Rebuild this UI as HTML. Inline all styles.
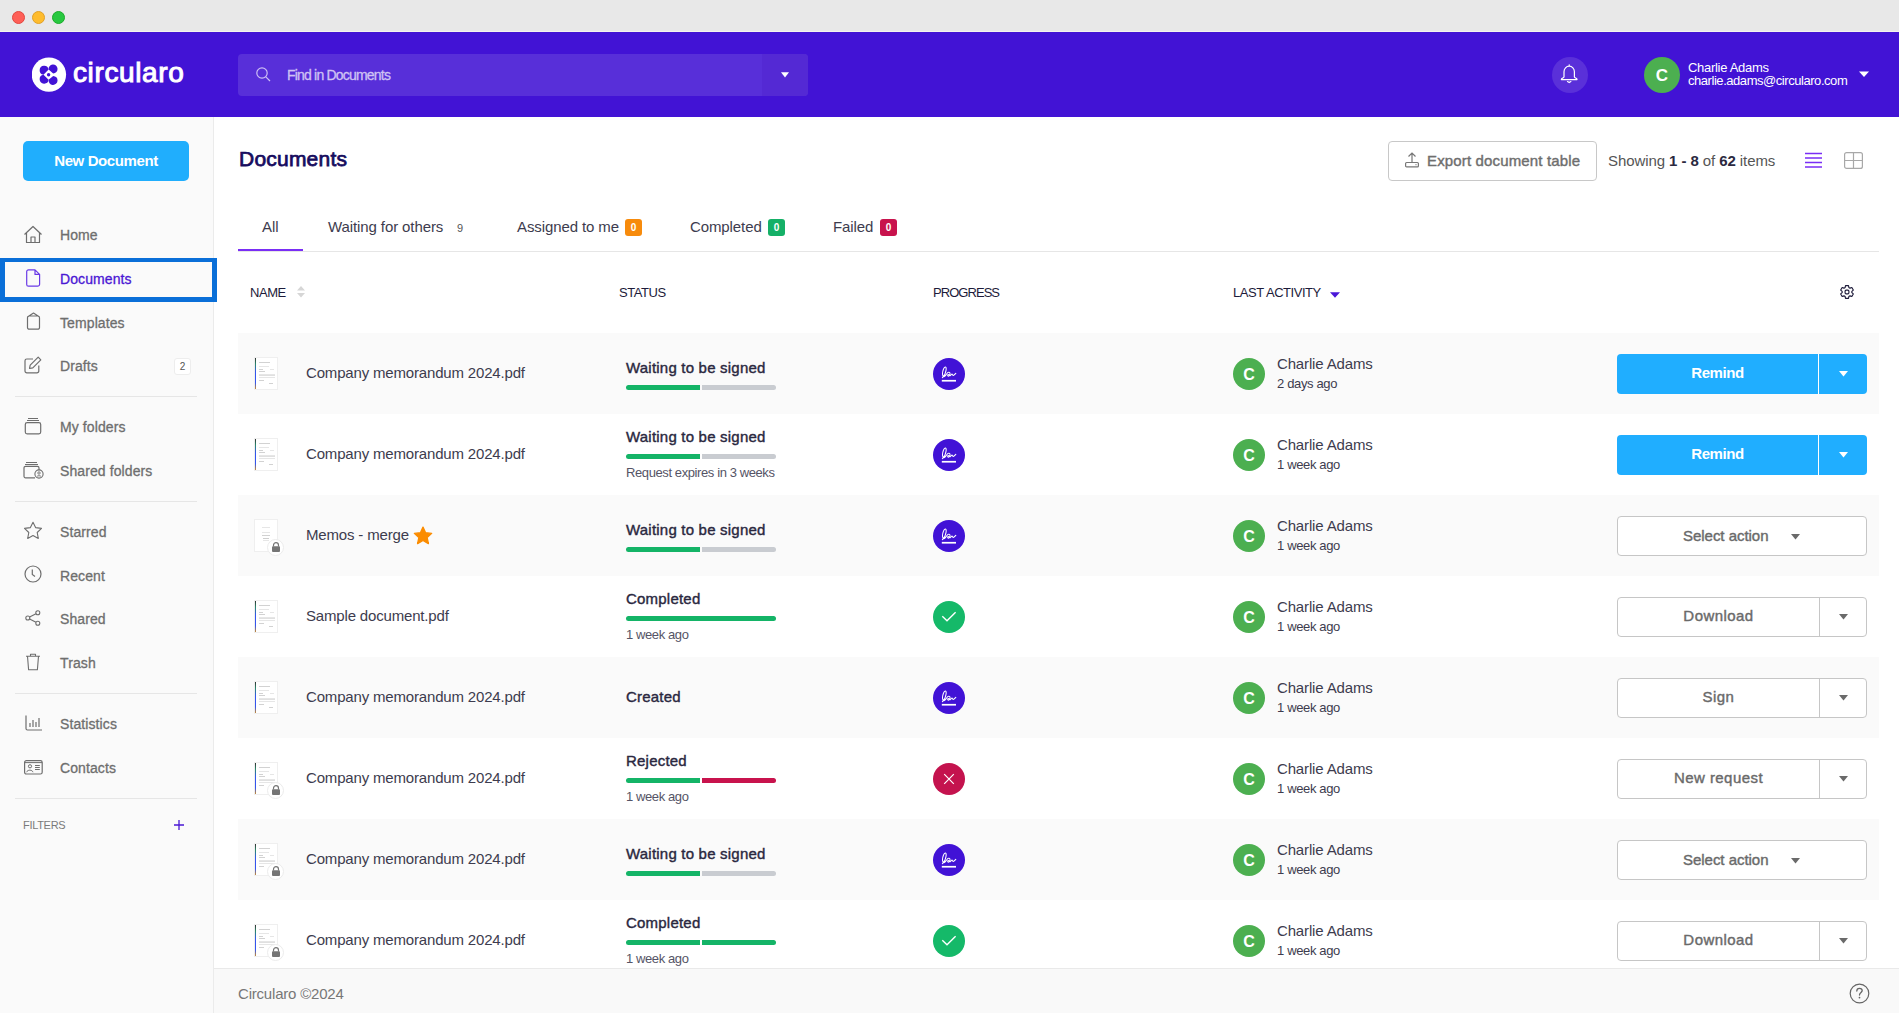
<!DOCTYPE html>
<html><head><meta charset="utf-8">
<style>
*{box-sizing:border-box}
html,body{margin:0;padding:0}
body{width:1899px;height:1013px;overflow:hidden;position:relative;background:#fff;font-family:"Liberation Sans",sans-serif;color:#3a3a4a}
.abs{position:absolute}
#titlebar{position:absolute;left:0;top:0;width:1899px;height:32px;background:#e8e8e8;border-bottom:1px solid #f4f4ee}
.tl-dot{position:absolute;top:10.6px;width:13.2px;height:13.2px;border-radius:50%}
#header{position:absolute;left:0;top:32px;width:1899px;height:85px;background:#4213d5}
#search{position:absolute;left:238px;top:22px;width:570px;height:42px;border-radius:4px;background:#582fd9;overflow:hidden}
#search .dd{position:absolute;left:524px;top:0;width:46px;height:42px;background:#5429d4}
#sidebar{position:absolute;left:0;top:117px;width:214px;height:896px;background:#fafafa;border-right:1px solid #ebebeb}
.nav{position:absolute;left:60px;font-size:14px;font-weight:normal;-webkit-text-stroke:0.3px currentColor;color:#6e6e6e;letter-spacing:0.1px;white-space:nowrap}
.navi{position:absolute;left:23px}
.sep{}
.hsep{position:absolute;left:15px;width:182px;height:1px;background:#e6e6e6}
#main{position:absolute;left:214px;top:117px;width:1685px;height:896px}
.tab{position:absolute;top:102px;font-size:15px;color:#3d3c4e;letter-spacing:-0.1px;white-space:nowrap}
.badge{display:inline-block;position:absolute;top:102px;width:17px;height:17px;border-radius:3px;color:#fff;font-size:10px;font-weight:bold;text-align:center;line-height:17px}
.th{position:absolute;top:169px;font-size:13px;color:#1d1b3a;letter-spacing:-0.45px;white-space:nowrap}
.row{position:absolute;left:238px;width:1641px;height:81px}
.tw{position:absolute}
.thumb{position:absolute;left:0;top:0;width:24px;height:33px;background:#fff;border:1px solid #efefef}
.strip{position:absolute;left:0;top:0;width:1.4px;height:31px;background:linear-gradient(#333,#2a8a6a 20%,#3355ee 45%,#3355ee 80%,#c88a30)}
.tl{position:absolute;height:1px;background:#e6e6e6}
.lockb{position:absolute;left:13px;top:20px;width:17px;height:17px;border-radius:50%;background:#fff;border:1px solid #ececec;display:flex;align-items:center;justify-content:center}
.lockb svg{margin-top:-1px}
.nm{position:absolute;top:31px;font-size:15px;color:#3d3c4e;letter-spacing:-0.17px;white-space:nowrap;line-height:18px}
.star{position:absolute;left:107px;top:0px}
.st{position:absolute;left:388px;font-size:15px;font-weight:normal;-webkit-text-stroke:0.4px #2a2840;color:#2a2840;letter-spacing:0.21px;white-space:nowrap;line-height:18px}
.bar1{position:absolute;left:388px;width:74px;height:5px;background:#14b467;border-radius:3px 0 0 3px}
.bar2{position:absolute;left:464px;width:74px;height:5px;border-radius:0 3px 3px 0}
.sub{position:absolute;left:388px;font-size:13px;color:#555466;letter-spacing:-0.4px;white-space:nowrap;line-height:16px}
.prog{position:absolute;left:695px;top:25px;width:32px;height:32px}
.prog svg{display:block}
.av{position:absolute;left:995px;top:25px;width:32px;height:32px;border-radius:50%;background:#4caf50;color:#fff;font-weight:bold;font-size:16px;text-align:center;line-height:33px}
.an{position:absolute;left:1039px;top:22px;font-size:15px;color:#3d3c4e;letter-spacing:-0.15px;white-space:nowrap;line-height:18px}
.aw{position:absolute;left:1039px;top:43px;font-size:13px;color:#3d3c4e;letter-spacing:-0.35px;white-space:nowrap;line-height:16px}
.btn{position:absolute;left:1379px;top:21px;width:250px;height:40px;border-radius:4px}
.btn.blue{background:#20aeff}
.btn.white{background:#fff;border:1px solid #c6c6c6}
.btn .bl{position:absolute;left:0;top:-1.6px;width:201px;height:100%;display:flex;align-items:center;justify-content:center;font-size:15px;font-weight:bold;letter-spacing:-0.45px}
.btn.blue .bl{color:#fff}
.btn.white .bl{color:#6a6a6a;font-weight:normal;-webkit-text-stroke:0.4px #6a6a6a;letter-spacing:0.45px}
.btn .sep{position:absolute;left:201px;top:0;width:1px;height:100%}
.btn.blue .sep{background:#fff}
.btn.white .sep{background:#c6c6c6}
.btn .dd{position:absolute;left:202px;top:0;right:0;height:100%;display:flex;align-items:center;justify-content:center}
.btn .dd svg,.btn .sc svg{display:block}
.btn .sl{position:absolute;left:65px;top:9.5px;font-size:15px;font-weight:normal;-webkit-text-stroke:0.4px #6a6a6a;color:#6a6a6a;letter-spacing:-0.03px;white-space:nowrap;line-height:18px}
.btn .sc{position:absolute;left:173px;top:17px}
#footer{position:absolute;left:214px;top:968px;width:1685px;height:45px;background:#f9f9f9;border-top:1px solid #e9e9e9}
</style></head>
<body>
<div id="titlebar">
  <div class="tl-dot" style="left:12.3px;background:#fe5f57;border:0.5px solid #e2463f"></div>
  <div class="tl-dot" style="left:32.3px;background:#febc2e;border:0.5px solid #e0a028"></div>
  <div class="tl-dot" style="left:52.3px;background:#28c840;border:0.5px solid #1aab29"></div>
</div>
<div id="header">
  <svg class="abs" style="left:32px;top:25px" width="35" height="35" viewBox="0 0 35 35">
    <circle cx="16.9" cy="17.6" r="17.2" fill="#fff"/>
    <g fill="#4213d5">
      <path d="M16.6 12.6 L11.5 17.7 A4.5 4.5 0 1 1 16.6 12.6 Z"/>
      <path d="M16.6 12.6 L21.2 16.5 A4.5 4.5 0 1 0 16.6 12.6 Z"/>
      <path d="M16.6 22.8 L11.5 17.7 A4.5 4.5 0 1 0 16.6 22.8 Z"/>
      <path d="M16.6 22.8 L21.2 18.9 A4.5 4.5 0 1 1 16.6 22.8 Z"/>
    </g>
    <circle cx="16.6" cy="17.7" r="1.7" fill="#4213d5"/>
  </svg>
  <div class="abs" style="left:73px;top:24px;font-size:28px;font-weight:normal;-webkit-text-stroke:1px #fff;color:#fff;letter-spacing:0.62px;line-height:34px">circularo</div>
  <div id="search">
    <svg class="abs" style="left:18px;top:13px" width="15" height="15" viewBox="0 0 15 15"><circle cx="6" cy="6" r="5.2" stroke="#cdbff5" stroke-width="1.2" fill="none"/><path d="M9.8 9.8 L14 14" stroke="#cdbff5" stroke-width="1.2"/></svg>
    <div class="abs" style="left:49px;top:13px;font-size:14px;color:#cfc2f4;-webkit-text-stroke:0.3px #cfc2f4;letter-spacing:-0.8px;line-height:16px">Find in Documents</div>
    <div class="dd"><svg class="abs" style="left:19px;top:18px" width="8" height="6" viewBox="0 0 8 6"><path d="M0 0.3 H8 L4 5.6 Z" fill="#fff"/></svg></div>
  </div>
  <div class="abs" style="left:1552px;top:25px;width:36px;height:36px;border-radius:50%;background:#5a30d9"></div>
  <svg class="abs" style="left:1560px;top:32px" width="19" height="20" viewBox="0 0 19 20"><path d="M9.2 0.8 V2.2 M4 13 V7.8 C4 4.6 6.3 2.2 9.2 2.2 C12.1 2.2 14.4 4.6 14.4 7.8 V13 C14.4 13.8 17 14.2 17 15.2 V15.6 H1.4 V15.2 C1.4 14.2 4 13.8 4 13 Z M7.5 17.6 L9.2 18.6 L10.9 17.6" stroke="#fff" stroke-width="1.2" fill="none" stroke-linejoin="round" stroke-linecap="round"/></svg>
  <div class="abs" style="left:1644px;top:25px;width:36px;height:36px;border-radius:50%;background:#4caf50;color:#fff;font-weight:bold;font-size:17px;text-align:center;line-height:38px">C</div>
  <div class="abs" style="left:1688px;top:28px;font-size:13px;color:#fff;letter-spacing:-0.3px;line-height:15px">Charlie Adams</div>
  <div class="abs" style="left:1688px;top:41px;font-size:13px;color:#fff;letter-spacing:-0.45px;line-height:15px">charlie.adams@circularo.com</div>
  <svg class="abs" style="left:1859px;top:39px" width="10" height="7" viewBox="0 0 10 7"><path d="M0 0.5 H10 L5 6 Z" fill="#fff"/></svg>
</div>

<div id="sidebar">
  <div class="abs" style="left:23px;top:24px;width:166px;height:40px;border-radius:5px;background:#20aefd;color:#fff;font-size:15px;font-weight:bold;text-align:center;line-height:40px;letter-spacing:-0.4px">New Document</div>

  <!-- Home -->
  <svg class="navi" style="top:108px;left:23px" width="20" height="19" viewBox="0 0 20 19"><path d="M1.5 9.5 L10 1.5 L18.5 9.5 M3.5 7.8 V17.5 H16.5 V7.8 M8 17.5 V12 H12 V17.5" stroke="#6e6e6e" stroke-width="1.2" fill="none" stroke-linejoin="round"/></svg>
  <div class="nav" style="top:110px">Home</div>

  <!-- Documents selected -->
  <div class="abs" style="left:0;top:141px;width:217px;height:44px;border:4px solid #0a6fd8;border-width:4px 5px 5px 5px"></div>
  <svg class="navi" style="top:152px;left:26px" width="15" height="18" viewBox="0 0 15 18"><path d="M2.5 0.8 H9 L13.6 5.4 V15.2 A2 2 0 0 1 11.6 17.2 H2.5 A1.8 1.8 0 0 1 0.7 15.4 V2.6 A1.8 1.8 0 0 1 2.5 0.8 Z M9 0.8 V5.4 H13.6" stroke="#6a3ae6" stroke-width="1.2" fill="none" stroke-linejoin="round"/></svg>
  <div class="nav" style="top:154px;color:#4a17d4">Documents</div>

  <!-- Templates -->
  <svg class="navi" style="top:195px;left:26px" width="15" height="18" viewBox="0 0 15 18"><path d="M3.2 4 H11.8 A1.7 1.7 0 0 1 13.5 5.7 V15.5 A1.7 1.7 0 0 1 11.8 17.2 H3.2 A1.7 1.7 0 0 1 1.5 15.5 V5.7 A1.7 1.7 0 0 1 3.2 4 Z M2.2 4.4 L7.5 1 L12.8 4.4" stroke="#6e6e6e" stroke-width="1.2" fill="none" stroke-linejoin="round"/></svg>
  <div class="nav" style="top:198px">Templates</div>

  <!-- Drafts -->
  <svg class="navi" style="top:239px;left:24px" width="18" height="18" viewBox="0 0 18 18"><path d="M9 3 H2.8 A1.8 1.8 0 0 0 1 4.8 V15 A1.8 1.8 0 0 0 2.8 16.8 H13 A1.8 1.8 0 0 0 14.8 15 V9.5 M5.5 12.5 L6.2 9.2 L14.2 1.2 L16.8 3.8 L8.8 11.8 Z" stroke="#6e6e6e" stroke-width="1.2" fill="none" stroke-linejoin="round"/></svg>
  <div class="nav" style="top:241px">Drafts</div>
  <div class="abs" style="left:174px;top:241px;width:17px;height:17px;border-radius:3px;background:#fff;border:1px solid #ededed;font-size:10px;color:#555;text-align:center;line-height:16px">2</div>

  <div class="hsep" style="top:279px"></div>

  <!-- My folders -->
  <svg class="navi" style="top:300px;left:24px" width="18" height="18" viewBox="0 0 18 18"><path d="M4 1.5 H14 M3 3.5 H15" stroke="#6e6e6e" stroke-width="1"/><rect x="1.3" y="5.6" width="15.4" height="11.3" rx="1.8" stroke="#6e6e6e" stroke-width="1.2" fill="none"/></svg>
  <div class="nav" style="top:302px">My folders</div>

  <!-- Shared folders -->
  <svg class="navi" style="top:344px;left:23px" width="22" height="19" viewBox="0 0 22 19"><path d="M3 1.5 H14 M2 3.5 H15" stroke="#6e6e6e" stroke-width="1"/><path d="M12 16.8 H2.6 A1.6 1.6 0 0 1 1 15.2 V6.9 A1.6 1.6 0 0 1 2.6 5.3 H14.4 A1.6 1.6 0 0 1 16 6.9 V9.5" stroke="#6e6e6e" stroke-width="1.2" fill="none"/><circle cx="16" cy="13" r="4.1" stroke="#6e6e6e" stroke-width="1.1" fill="#fafafa"/><circle cx="16" cy="12" r="1.2" stroke="#6e6e6e" stroke-width="0.9" fill="none"/><path d="M13.6 15.9 C14.3 14.3 17.7 14.3 18.4 15.9" stroke="#6e6e6e" stroke-width="0.9" fill="none"/></svg>
  <div class="nav" style="top:346px">Shared folders</div>

  <div class="hsep" style="top:384px"></div>

  <!-- Starred -->
  <svg class="navi" style="top:404px;left:23px" width="20" height="19" viewBox="0 0 20 19"><path d="M10 1.2 L12.6 6.6 L18.5 7.4 L14.2 11.5 L15.3 17.4 L10 14.6 L4.7 17.4 L5.8 11.5 L1.5 7.4 L7.4 6.6 Z" stroke="#6e6e6e" stroke-width="1.1" fill="none" stroke-linejoin="round"/></svg>
  <div class="nav" style="top:407px">Starred</div>

  <!-- Recent -->
  <svg class="navi" style="top:448px;left:24px" width="18" height="18" viewBox="0 0 18 18"><circle cx="9" cy="9" r="8" stroke="#6e6e6e" stroke-width="1.2" fill="none"/><path d="M8.3 4.5 V9.5 L11 11.5" stroke="#6e6e6e" stroke-width="1.2" fill="none"/></svg>
  <div class="nav" style="top:451px">Recent</div>

  <!-- Shared -->
  <svg class="navi" style="top:493px;left:25px" width="16" height="16" viewBox="0 0 16 16"><circle cx="12.8" cy="2.8" r="2" stroke="#6e6e6e" stroke-width="1.1" fill="none"/><circle cx="2.8" cy="8" r="2" stroke="#6e6e6e" stroke-width="1.1" fill="none"/><circle cx="12.8" cy="13.2" r="2" stroke="#6e6e6e" stroke-width="1.1" fill="none"/><path d="M4.6 7 L11 3.8 M4.6 9 L11 12.2" stroke="#6e6e6e" stroke-width="1.1"/></svg>
  <div class="nav" style="top:494px">Shared</div>

  <!-- Trash -->
  <svg class="navi" style="top:536px;left:25px" width="16" height="18" viewBox="0 0 16 18"><path d="M1 3.2 H15 M5.5 3.2 V1.2 H10.5 V3.2 M2.5 3.2 L3.6 16.8 H12.4 L13.5 3.2" stroke="#6e6e6e" stroke-width="1.1" fill="none" stroke-linejoin="round"/></svg>
  <div class="nav" style="top:538px">Trash</div>

  <div class="hsep" style="top:576px"></div>

  <!-- Statistics -->
  <svg class="navi" style="top:598px;left:25px" width="18" height="16" viewBox="0 0 18 16"><path d="M1 0.5 V13.5 A1.5 1.5 0 0 0 2.5 15 H17" stroke="#6e6e6e" stroke-width="1.2" fill="none"/><path d="M5 12 V8 M8 12 V5 M11 12 V7 M14 12 V3" stroke="#6e6e6e" stroke-width="1.2"/></svg>
  <div class="nav" style="top:599px">Statistics</div>

  <!-- Contacts -->
  <svg class="navi" style="top:643px;left:24px" width="20" height="16" viewBox="0 0 20 16"><rect x="0.6" y="0.6" width="17.6" height="13.4" rx="1.8" stroke="#6e6e6e" stroke-width="1.2" fill="none"/><path d="M0.6 2.6 H18.2" stroke="#6e6e6e" stroke-width="1"/><circle cx="6" cy="6.3" r="1.6" stroke="#6e6e6e" stroke-width="1" fill="none"/><path d="M2.6 12.2 C3.3 9.5 8.3 9.5 9 12.2 M11 5.5 H15.8 M11 7.5 H15.8 M11 9.5 H15.8" stroke="#6e6e6e" stroke-width="1" fill="none"/></svg>
  <div class="nav" style="top:643px">Contacts</div>

  <div class="hsep" style="top:681px"></div>

  <div class="abs" style="left:23px;top:702px;font-size:11px;color:#7a7a7a;letter-spacing:-0.3px;line-height:13px">FILTERS</div>
  <svg class="abs" style="left:174px;top:703px" width="10" height="10" viewBox="0 0 10 10"><path d="M5 0 V10 M0 5 H10" stroke="#4a17d4" stroke-width="1.3"/></svg>
</div>

<div id="main"></div>

<!-- Page title -->
<div class="abs" style="left:239px;top:147.5px;font-size:21px;font-weight:normal;-webkit-text-stroke:0.75px #170c5e;color:#170c5e;letter-spacing:0.22px;line-height:22px">Documents</div>

<!-- Export button -->
<div class="abs" style="left:1388px;top:141px;width:209px;height:40px;border:1px solid #c8c8c8;border-radius:4px;background:#fff"></div>
<svg class="abs" style="left:1404px;top:152px" width="16" height="16" viewBox="0 0 16 16"><path d="M8 1 V11 M4.5 4.5 L8 1 L11.5 4.5" stroke="#777" stroke-width="1.2" fill="none"/><rect x="1.6" y="10.5" width="12.8" height="4.4" rx="1" stroke="#777" stroke-width="1.2" fill="none"/><circle cx="12" cy="12.7" r="0.6" fill="#777"/></svg>
<div class="abs" style="left:1427px;top:153px;font-size:15px;font-weight:normal;-webkit-text-stroke:0.4px #6e6e6e;color:#6e6e6e;letter-spacing:0.15px;line-height:16px">Export document table</div>

<div class="abs" style="left:1608px;top:153px;font-size:15px;color:#555;letter-spacing:-0.08px;line-height:16px;white-space:nowrap">Showing <b style="color:#2b2940">1 - 8</b> of <b style="color:#2b2940">62</b> items</div>

<svg class="abs" style="left:1805px;top:152px" width="17" height="17" viewBox="0 0 17 17"><path d="M0 1.5 H17 M0 6 H17 M0 10.5 H17 M0 15 H17" stroke="#7a2ef5" stroke-width="1.4"/></svg>
<svg class="abs" style="left:1844px;top:152px" width="19" height="17" viewBox="0 0 19 17"><rect x="0.6" y="0.6" width="17.8" height="15.8" rx="2" stroke="#a8a8a8" stroke-width="1.2" fill="none"/><path d="M9.5 0.6 V16.4 M0.6 8.5 H18.4" stroke="#a8a8a8" stroke-width="1.2"/></svg>

<!-- Tabs -->
<div class="abs" style="left:238px;top:251px;width:1641px;height:1px;background:#e6e6e6"></div>
<div class="abs" style="left:238px;top:249px;width:65px;height:2px;background:#7a2ef5"></div>
<div class="tab" style="left:262px;top:218px">All</div>
<div class="tab" style="left:328px;top:218px">Waiting for others</div>
<div class="abs" style="left:457px;top:222px;font-size:11px;color:#555;line-height:13px">9</div>
<div class="tab" style="left:517px;top:218px">Assigned to me</div>
<div class="badge" style="left:625px;top:219px;background:#f78b0c">0</div>
<div class="tab" style="left:690px;top:218px">Completed</div>
<div class="badge" style="left:768px;top:219px;background:#15b067">0</div>
<div class="tab" style="left:833px;top:218px">Failed</div>
<div class="badge" style="left:880px;top:219px;background:#c8134d">0</div>

<!-- Table header -->
<div class="th" style="left:250px;top:285px">NAME</div>
<svg class="abs" style="left:296px;top:285px" width="10" height="14" viewBox="0 0 10 14"><path d="M1 5.5 L5 1 L9 5.5 Z M1 8 L5 12.5 L9 8 Z" fill="#d6d6d6"/></svg>
<div class="th" style="left:619px;top:285px">STATUS</div>
<div class="th" style="left:933px;top:285px;letter-spacing:-0.95px">PROGRESS</div>
<div class="th" style="left:1233px;top:285px">LAST ACTIVITY</div>
<svg class="abs" style="left:1330px;top:292px" width="10" height="6" viewBox="0 0 10 6"><path d="M0 0.3 H10 L5 5.8 Z" fill="#4a17d8"/></svg>
<svg class="abs" style="left:1839px;top:284px" width="16" height="16" viewBox="0 0 16 16"><path d="M6.16 3.46 L6.52 1.57 L9.48 1.57 L9.84 3.46 L11.02 4.14 L12.83 3.50 L14.31 6.07 L12.85 7.32 L12.85 8.68 L14.31 9.93 L12.83 12.50 L11.02 11.86 L9.84 12.54 L9.48 14.43 L6.52 14.43 L6.16 12.54 L4.98 11.86 L3.17 12.50 L1.69 9.93 L3.15 8.68 L3.15 7.32 L1.69 6.07 L3.17 3.50 L4.98 4.14 Z" stroke="#1d1b3a" stroke-width="1.15" fill="none" stroke-linejoin="round"/><rect x="6.1" y="6.1" width="3.8" height="3.8" rx="1.1" stroke="#1d1b3a" stroke-width="1.15" fill="none"/></svg>

<div class="row" style="top:333px;background:#fafafa"><div class="tw" style="left:16px;top:24px"><div class="thumb"><div class="strip"></div><div class="tl" style="left:4px;top:4px;width:11px;background:#d2d2d2"></div><div class="tl" style="left:4px;top:8px;width:10px"></div><div class="tl" style="left:4px;top:11px;width:4px;background:#d2d2d2"></div><div class="tl" style="left:15px;top:11px;width:4px"></div><div class="tl" style="left:4px;top:13px;width:6px;background:#d2d2d2"></div><div class="tl" style="left:4px;top:16px;width:16px"></div><div class="tl" style="left:4px;top:17px;width:16px;background:#e0e0e0"></div><div class="tl" style="left:4px;top:19px;width:16px"></div><div class="tl" style="left:4px;top:22px;width:5px;background:#d2d2d2"></div><div class="tl" style="left:14px;top:25px;width:4px;background:#d2d2d2"></div></div></div><div class="nm" style="left:68px">Company memorandum 2024.pdf</div><div class="st" style="top:26px">Waiting to be signed</div><div class="bar1" style="top:52px"></div><div class="bar2" style="top:52px;background:#c9ccd1"></div><div class="prog"><svg width="32" height="32" viewBox="0 0 32 32"><circle cx="16" cy="16" r="16" fill="#4112d6"/><path d="M9.4 19.6 C10.6 18.6 12.6 15.6 13.1 12 C13.4 9.6 12.8 8.9 12.2 9 C11 9.2 9.6 12.4 9.5 15.6 C9.4 17.9 10.3 18.9 11.4 18.5 C12.4 18.1 13.2 16.9 13.9 15.6 C14.5 14.4 15.7 13.9 16.6 14.4 C17.4 14.9 17.1 17.6 15.9 18.1 C14.9 18.5 14.2 17.4 15 16.6 C15.8 16.3 16.6 17.5 17.3 17.7 C17.9 17.2 18.6 16 19.1 16.1 C19.5 16.4 19.7 17.5 20.3 17.5 C21.1 17.3 22 16.3 22.8 15.4" stroke="#fff" stroke-width="1.05" fill="none" stroke-linecap="round" stroke-linejoin="round"/><rect x="8.8" y="21.9" width="14.2" height="1.7" fill="#fff"/></svg></div><div class="av">C</div><div class="an">Charlie Adams</div><div class="aw">2 days ago</div><div class="btn blue"><span class="bl">Remind</span><span class="sep"></span><span class="dd"><svg width="9" height="6" viewBox="0 0 9 6"><path d="M0 0 H9 L4.5 5.5 Z" fill="#fff"/></svg></span></div></div><div class="row" style="top:414px;background:#ffffff"><div class="tw" style="left:16px;top:24px"><div class="thumb"><div class="strip"></div><div class="tl" style="left:4px;top:4px;width:11px;background:#d2d2d2"></div><div class="tl" style="left:4px;top:8px;width:10px"></div><div class="tl" style="left:4px;top:11px;width:4px;background:#d2d2d2"></div><div class="tl" style="left:15px;top:11px;width:4px"></div><div class="tl" style="left:4px;top:13px;width:6px;background:#d2d2d2"></div><div class="tl" style="left:4px;top:16px;width:16px"></div><div class="tl" style="left:4px;top:17px;width:16px;background:#e0e0e0"></div><div class="tl" style="left:4px;top:19px;width:16px"></div><div class="tl" style="left:4px;top:22px;width:5px;background:#d2d2d2"></div><div class="tl" style="left:14px;top:25px;width:4px;background:#d2d2d2"></div></div></div><div class="nm" style="left:68px">Company memorandum 2024.pdf</div><div class="st" style="top:14px">Waiting to be signed</div><div class="bar1" style="top:40px"></div><div class="bar2" style="top:40px;background:#c9ccd1"></div><div class="sub" style="top:51px">Request expires in 3 weeks</div><div class="prog"><svg width="32" height="32" viewBox="0 0 32 32"><circle cx="16" cy="16" r="16" fill="#4112d6"/><path d="M9.4 19.6 C10.6 18.6 12.6 15.6 13.1 12 C13.4 9.6 12.8 8.9 12.2 9 C11 9.2 9.6 12.4 9.5 15.6 C9.4 17.9 10.3 18.9 11.4 18.5 C12.4 18.1 13.2 16.9 13.9 15.6 C14.5 14.4 15.7 13.9 16.6 14.4 C17.4 14.9 17.1 17.6 15.9 18.1 C14.9 18.5 14.2 17.4 15 16.6 C15.8 16.3 16.6 17.5 17.3 17.7 C17.9 17.2 18.6 16 19.1 16.1 C19.5 16.4 19.7 17.5 20.3 17.5 C21.1 17.3 22 16.3 22.8 15.4" stroke="#fff" stroke-width="1.05" fill="none" stroke-linecap="round" stroke-linejoin="round"/><rect x="8.8" y="21.9" width="14.2" height="1.7" fill="#fff"/></svg></div><div class="av">C</div><div class="an">Charlie Adams</div><div class="aw">1 week ago</div><div class="btn blue"><span class="bl">Remind</span><span class="sep"></span><span class="dd"><svg width="9" height="6" viewBox="0 0 9 6"><path d="M0 0 H9 L4.5 5.5 Z" fill="#fff"/></svg></span></div></div><div class="row" style="top:495px;background:#fafafa"><div class="tw" style="left:16px;top:24px"><div class="thumb"><div class="tl" style="left:7px;top:7px;width:8px"></div><div class="tl" style="left:7px;top:12px;width:8px"></div><div class="tl" style="left:7px;top:15px;width:8px;background:#d2d2d2"></div><div class="tl" style="left:8px;top:18px;width:6px;background:#cfcfcf"></div><div class="tl" style="left:8px;top:20px;width:6px"></div></div><div class="lockb"><svg width="10" height="10" viewBox="0 0 10 10"><path d="M2.5 4.5 V3.2 A2.5 2.5 0 0 1 7.5 3.2 V4.5" stroke="#757575" stroke-width="1.2" fill="none"/><rect x="1" y="4.3" width="8" height="5.7" rx="1" fill="#757575"/></svg></div></div><div class="nm" style="left:68px">Memos - merge<svg class="star" width="20" height="19" viewBox="0 0 24 22.5"><path d="M12 1.2 L15.1 7.9 L22.4 8.7 L17 13.7 L18.5 21 L12 17.3 L5.5 21 L7 13.7 L1.6 8.7 L8.9 7.9 Z" fill="#fb8c00" stroke="#fb8c00" stroke-width="1.6" stroke-linejoin="round"/></svg></div><div class="st" style="top:26px">Waiting to be signed</div><div class="bar1" style="top:52px"></div><div class="bar2" style="top:52px;background:#c9ccd1"></div><div class="prog"><svg width="32" height="32" viewBox="0 0 32 32"><circle cx="16" cy="16" r="16" fill="#4112d6"/><path d="M9.4 19.6 C10.6 18.6 12.6 15.6 13.1 12 C13.4 9.6 12.8 8.9 12.2 9 C11 9.2 9.6 12.4 9.5 15.6 C9.4 17.9 10.3 18.9 11.4 18.5 C12.4 18.1 13.2 16.9 13.9 15.6 C14.5 14.4 15.7 13.9 16.6 14.4 C17.4 14.9 17.1 17.6 15.9 18.1 C14.9 18.5 14.2 17.4 15 16.6 C15.8 16.3 16.6 17.5 17.3 17.7 C17.9 17.2 18.6 16 19.1 16.1 C19.5 16.4 19.7 17.5 20.3 17.5 C21.1 17.3 22 16.3 22.8 15.4" stroke="#fff" stroke-width="1.05" fill="none" stroke-linecap="round" stroke-linejoin="round"/><rect x="8.8" y="21.9" width="14.2" height="1.7" fill="#fff"/></svg></div><div class="av">C</div><div class="an">Charlie Adams</div><div class="aw">1 week ago</div><div class="btn white sel"><span class="sl">Select action</span><span class="sc"><svg width="9" height="6" viewBox="0 0 9 6"><path d="M0 0 H9 L4.5 5.5 Z" fill="#6a6a6a"/></svg></span></div></div><div class="row" style="top:576px;background:#ffffff"><div class="tw" style="left:16px;top:24px"><div class="thumb"><div class="strip"></div><div class="tl" style="left:4px;top:4px;width:11px;background:#d2d2d2"></div><div class="tl" style="left:4px;top:8px;width:10px"></div><div class="tl" style="left:4px;top:11px;width:4px;background:#d2d2d2"></div><div class="tl" style="left:15px;top:11px;width:4px"></div><div class="tl" style="left:4px;top:13px;width:6px;background:#d2d2d2"></div><div class="tl" style="left:4px;top:16px;width:16px"></div><div class="tl" style="left:4px;top:17px;width:16px;background:#e0e0e0"></div><div class="tl" style="left:4px;top:19px;width:16px"></div><div class="tl" style="left:4px;top:22px;width:5px;background:#d2d2d2"></div><div class="tl" style="left:14px;top:25px;width:4px;background:#d2d2d2"></div></div></div><div class="nm" style="left:68px">Sample document.pdf</div><div class="st" style="top:14px">Completed</div><div class="bar1" style="top:40px;width:150px;border-radius:3px"></div><div class="sub" style="top:51px">1 week ago</div><div class="prog"><svg width="32" height="32" viewBox="0 0 32 32"><circle cx="16" cy="16" r="16" fill="#15b969"/><path d="M9.3 15.3 L14 19.8 L22.6 11.3" stroke="#fff" stroke-width="1.4" fill="none"/></svg></div><div class="av">C</div><div class="an">Charlie Adams</div><div class="aw">1 week ago</div><div class="btn white"><span class="bl">Download</span><span class="sep"></span><span class="dd"><svg width="9" height="6" viewBox="0 0 9 6"><path d="M0 0 H9 L4.5 5.5 Z" fill="#6a6a6a"/></svg></span></div></div><div class="row" style="top:657px;background:#fafafa"><div class="tw" style="left:16px;top:24px"><div class="thumb"><div class="strip"></div><div class="tl" style="left:4px;top:4px;width:11px;background:#d2d2d2"></div><div class="tl" style="left:4px;top:8px;width:10px"></div><div class="tl" style="left:4px;top:11px;width:4px;background:#d2d2d2"></div><div class="tl" style="left:15px;top:11px;width:4px"></div><div class="tl" style="left:4px;top:13px;width:6px;background:#d2d2d2"></div><div class="tl" style="left:4px;top:16px;width:16px"></div><div class="tl" style="left:4px;top:17px;width:16px;background:#e0e0e0"></div><div class="tl" style="left:4px;top:19px;width:16px"></div><div class="tl" style="left:4px;top:22px;width:5px;background:#d2d2d2"></div><div class="tl" style="left:14px;top:25px;width:4px;background:#d2d2d2"></div></div></div><div class="nm" style="left:68px">Company memorandum 2024.pdf</div><div class="st" style="top:31px">Created</div><div class="prog"><svg width="32" height="32" viewBox="0 0 32 32"><circle cx="16" cy="16" r="16" fill="#4112d6"/><path d="M9.4 19.6 C10.6 18.6 12.6 15.6 13.1 12 C13.4 9.6 12.8 8.9 12.2 9 C11 9.2 9.6 12.4 9.5 15.6 C9.4 17.9 10.3 18.9 11.4 18.5 C12.4 18.1 13.2 16.9 13.9 15.6 C14.5 14.4 15.7 13.9 16.6 14.4 C17.4 14.9 17.1 17.6 15.9 18.1 C14.9 18.5 14.2 17.4 15 16.6 C15.8 16.3 16.6 17.5 17.3 17.7 C17.9 17.2 18.6 16 19.1 16.1 C19.5 16.4 19.7 17.5 20.3 17.5 C21.1 17.3 22 16.3 22.8 15.4" stroke="#fff" stroke-width="1.05" fill="none" stroke-linecap="round" stroke-linejoin="round"/><rect x="8.8" y="21.9" width="14.2" height="1.7" fill="#fff"/></svg></div><div class="av">C</div><div class="an">Charlie Adams</div><div class="aw">1 week ago</div><div class="btn white"><span class="bl">Sign</span><span class="sep"></span><span class="dd"><svg width="9" height="6" viewBox="0 0 9 6"><path d="M0 0 H9 L4.5 5.5 Z" fill="#6a6a6a"/></svg></span></div></div><div class="row" style="top:738px;background:#ffffff"><div class="tw" style="left:16px;top:24px"><div class="thumb"><div class="strip"></div><div class="tl" style="left:4px;top:4px;width:11px;background:#d2d2d2"></div><div class="tl" style="left:4px;top:8px;width:10px"></div><div class="tl" style="left:4px;top:11px;width:4px;background:#d2d2d2"></div><div class="tl" style="left:15px;top:11px;width:4px"></div><div class="tl" style="left:4px;top:13px;width:6px;background:#d2d2d2"></div><div class="tl" style="left:4px;top:16px;width:16px"></div><div class="tl" style="left:4px;top:17px;width:16px;background:#e0e0e0"></div><div class="tl" style="left:4px;top:19px;width:16px"></div><div class="tl" style="left:4px;top:22px;width:5px;background:#d2d2d2"></div><div class="tl" style="left:14px;top:25px;width:4px;background:#d2d2d2"></div></div><div class="lockb"><svg width="10" height="10" viewBox="0 0 10 10"><path d="M2.5 4.5 V3.2 A2.5 2.5 0 0 1 7.5 3.2 V4.5" stroke="#757575" stroke-width="1.2" fill="none"/><rect x="1" y="4.3" width="8" height="5.7" rx="1" fill="#757575"/></svg></div></div><div class="nm" style="left:68px">Company memorandum 2024.pdf</div><div class="st" style="top:14px">Rejected</div><div class="bar1" style="top:40px"></div><div class="bar2" style="top:40px;background:#c8134d"></div><div class="sub" style="top:51px">1 week ago</div><div class="prog"><svg width="32" height="32" viewBox="0 0 32 32"><circle cx="16" cy="16" r="16" fill="#c4134e"/><path d="M11.2 11.2 L20.8 20.8 M20.8 11.2 L11.2 20.8" stroke="#fff" stroke-width="1.2" fill="none"/></svg></div><div class="av">C</div><div class="an">Charlie Adams</div><div class="aw">1 week ago</div><div class="btn white"><span class="bl">New request</span><span class="sep"></span><span class="dd"><svg width="9" height="6" viewBox="0 0 9 6"><path d="M0 0 H9 L4.5 5.5 Z" fill="#6a6a6a"/></svg></span></div></div><div class="row" style="top:819px;background:#fafafa"><div class="tw" style="left:16px;top:24px"><div class="thumb"><div class="strip"></div><div class="tl" style="left:4px;top:4px;width:11px;background:#d2d2d2"></div><div class="tl" style="left:4px;top:8px;width:10px"></div><div class="tl" style="left:4px;top:11px;width:4px;background:#d2d2d2"></div><div class="tl" style="left:15px;top:11px;width:4px"></div><div class="tl" style="left:4px;top:13px;width:6px;background:#d2d2d2"></div><div class="tl" style="left:4px;top:16px;width:16px"></div><div class="tl" style="left:4px;top:17px;width:16px;background:#e0e0e0"></div><div class="tl" style="left:4px;top:19px;width:16px"></div><div class="tl" style="left:4px;top:22px;width:5px;background:#d2d2d2"></div><div class="tl" style="left:14px;top:25px;width:4px;background:#d2d2d2"></div></div><div class="lockb"><svg width="10" height="10" viewBox="0 0 10 10"><path d="M2.5 4.5 V3.2 A2.5 2.5 0 0 1 7.5 3.2 V4.5" stroke="#757575" stroke-width="1.2" fill="none"/><rect x="1" y="4.3" width="8" height="5.7" rx="1" fill="#757575"/></svg></div></div><div class="nm" style="left:68px">Company memorandum 2024.pdf</div><div class="st" style="top:26px">Waiting to be signed</div><div class="bar1" style="top:52px"></div><div class="bar2" style="top:52px;background:#c9ccd1"></div><div class="prog"><svg width="32" height="32" viewBox="0 0 32 32"><circle cx="16" cy="16" r="16" fill="#4112d6"/><path d="M9.4 19.6 C10.6 18.6 12.6 15.6 13.1 12 C13.4 9.6 12.8 8.9 12.2 9 C11 9.2 9.6 12.4 9.5 15.6 C9.4 17.9 10.3 18.9 11.4 18.5 C12.4 18.1 13.2 16.9 13.9 15.6 C14.5 14.4 15.7 13.9 16.6 14.4 C17.4 14.9 17.1 17.6 15.9 18.1 C14.9 18.5 14.2 17.4 15 16.6 C15.8 16.3 16.6 17.5 17.3 17.7 C17.9 17.2 18.6 16 19.1 16.1 C19.5 16.4 19.7 17.5 20.3 17.5 C21.1 17.3 22 16.3 22.8 15.4" stroke="#fff" stroke-width="1.05" fill="none" stroke-linecap="round" stroke-linejoin="round"/><rect x="8.8" y="21.9" width="14.2" height="1.7" fill="#fff"/></svg></div><div class="av">C</div><div class="an">Charlie Adams</div><div class="aw">1 week ago</div><div class="btn white sel"><span class="sl">Select action</span><span class="sc"><svg width="9" height="6" viewBox="0 0 9 6"><path d="M0 0 H9 L4.5 5.5 Z" fill="#6a6a6a"/></svg></span></div></div><div class="row" style="top:900px;background:#ffffff"><div class="tw" style="left:16px;top:24px"><div class="thumb"><div class="strip"></div><div class="tl" style="left:4px;top:4px;width:11px;background:#d2d2d2"></div><div class="tl" style="left:4px;top:8px;width:10px"></div><div class="tl" style="left:4px;top:11px;width:4px;background:#d2d2d2"></div><div class="tl" style="left:15px;top:11px;width:4px"></div><div class="tl" style="left:4px;top:13px;width:6px;background:#d2d2d2"></div><div class="tl" style="left:4px;top:16px;width:16px"></div><div class="tl" style="left:4px;top:17px;width:16px;background:#e0e0e0"></div><div class="tl" style="left:4px;top:19px;width:16px"></div><div class="tl" style="left:4px;top:22px;width:5px;background:#d2d2d2"></div><div class="tl" style="left:14px;top:25px;width:4px;background:#d2d2d2"></div></div><div class="lockb"><svg width="10" height="10" viewBox="0 0 10 10"><path d="M2.5 4.5 V3.2 A2.5 2.5 0 0 1 7.5 3.2 V4.5" stroke="#757575" stroke-width="1.2" fill="none"/><rect x="1" y="4.3" width="8" height="5.7" rx="1" fill="#757575"/></svg></div></div><div class="nm" style="left:68px">Company memorandum 2024.pdf</div><div class="st" style="top:14px">Completed</div><div class="bar1" style="top:40px"></div><div class="bar2" style="top:40px;background:#14b467"></div><div class="sub" style="top:51px">1 week ago</div><div class="prog"><svg width="32" height="32" viewBox="0 0 32 32"><circle cx="16" cy="16" r="16" fill="#15b969"/><path d="M9.3 15.3 L14 19.8 L22.6 11.3" stroke="#fff" stroke-width="1.4" fill="none"/></svg></div><div class="av">C</div><div class="an">Charlie Adams</div><div class="aw">1 week ago</div><div class="btn white"><span class="bl">Download</span><span class="sep"></span><span class="dd"><svg width="9" height="6" viewBox="0 0 9 6"><path d="M0 0 H9 L4.5 5.5 Z" fill="#6a6a6a"/></svg></span></div></div>

<div id="footer">
  <div class="abs" style="left:24px;top:17px;font-size:15px;color:#777;letter-spacing:-0.2px;line-height:16px">Circularo ©2024</div>
  <svg class="abs" style="left:1635px;top:14px" width="21" height="21" viewBox="0 0 21 21"><circle cx="10.5" cy="10.5" r="9.3" stroke="#666" stroke-width="1.2" fill="none"/><path d="M7.8 8 C7.8 6.2 9 5.3 10.5 5.3 C12 5.3 13.2 6.2 13.2 7.6 C13.2 9.4 10.5 9.6 10.5 12" stroke="#666" stroke-width="1.3" fill="none" stroke-linecap="round"/><circle cx="10.5" cy="14.6" r="0.9" fill="#666"/></svg>
</div>
</body></html>
